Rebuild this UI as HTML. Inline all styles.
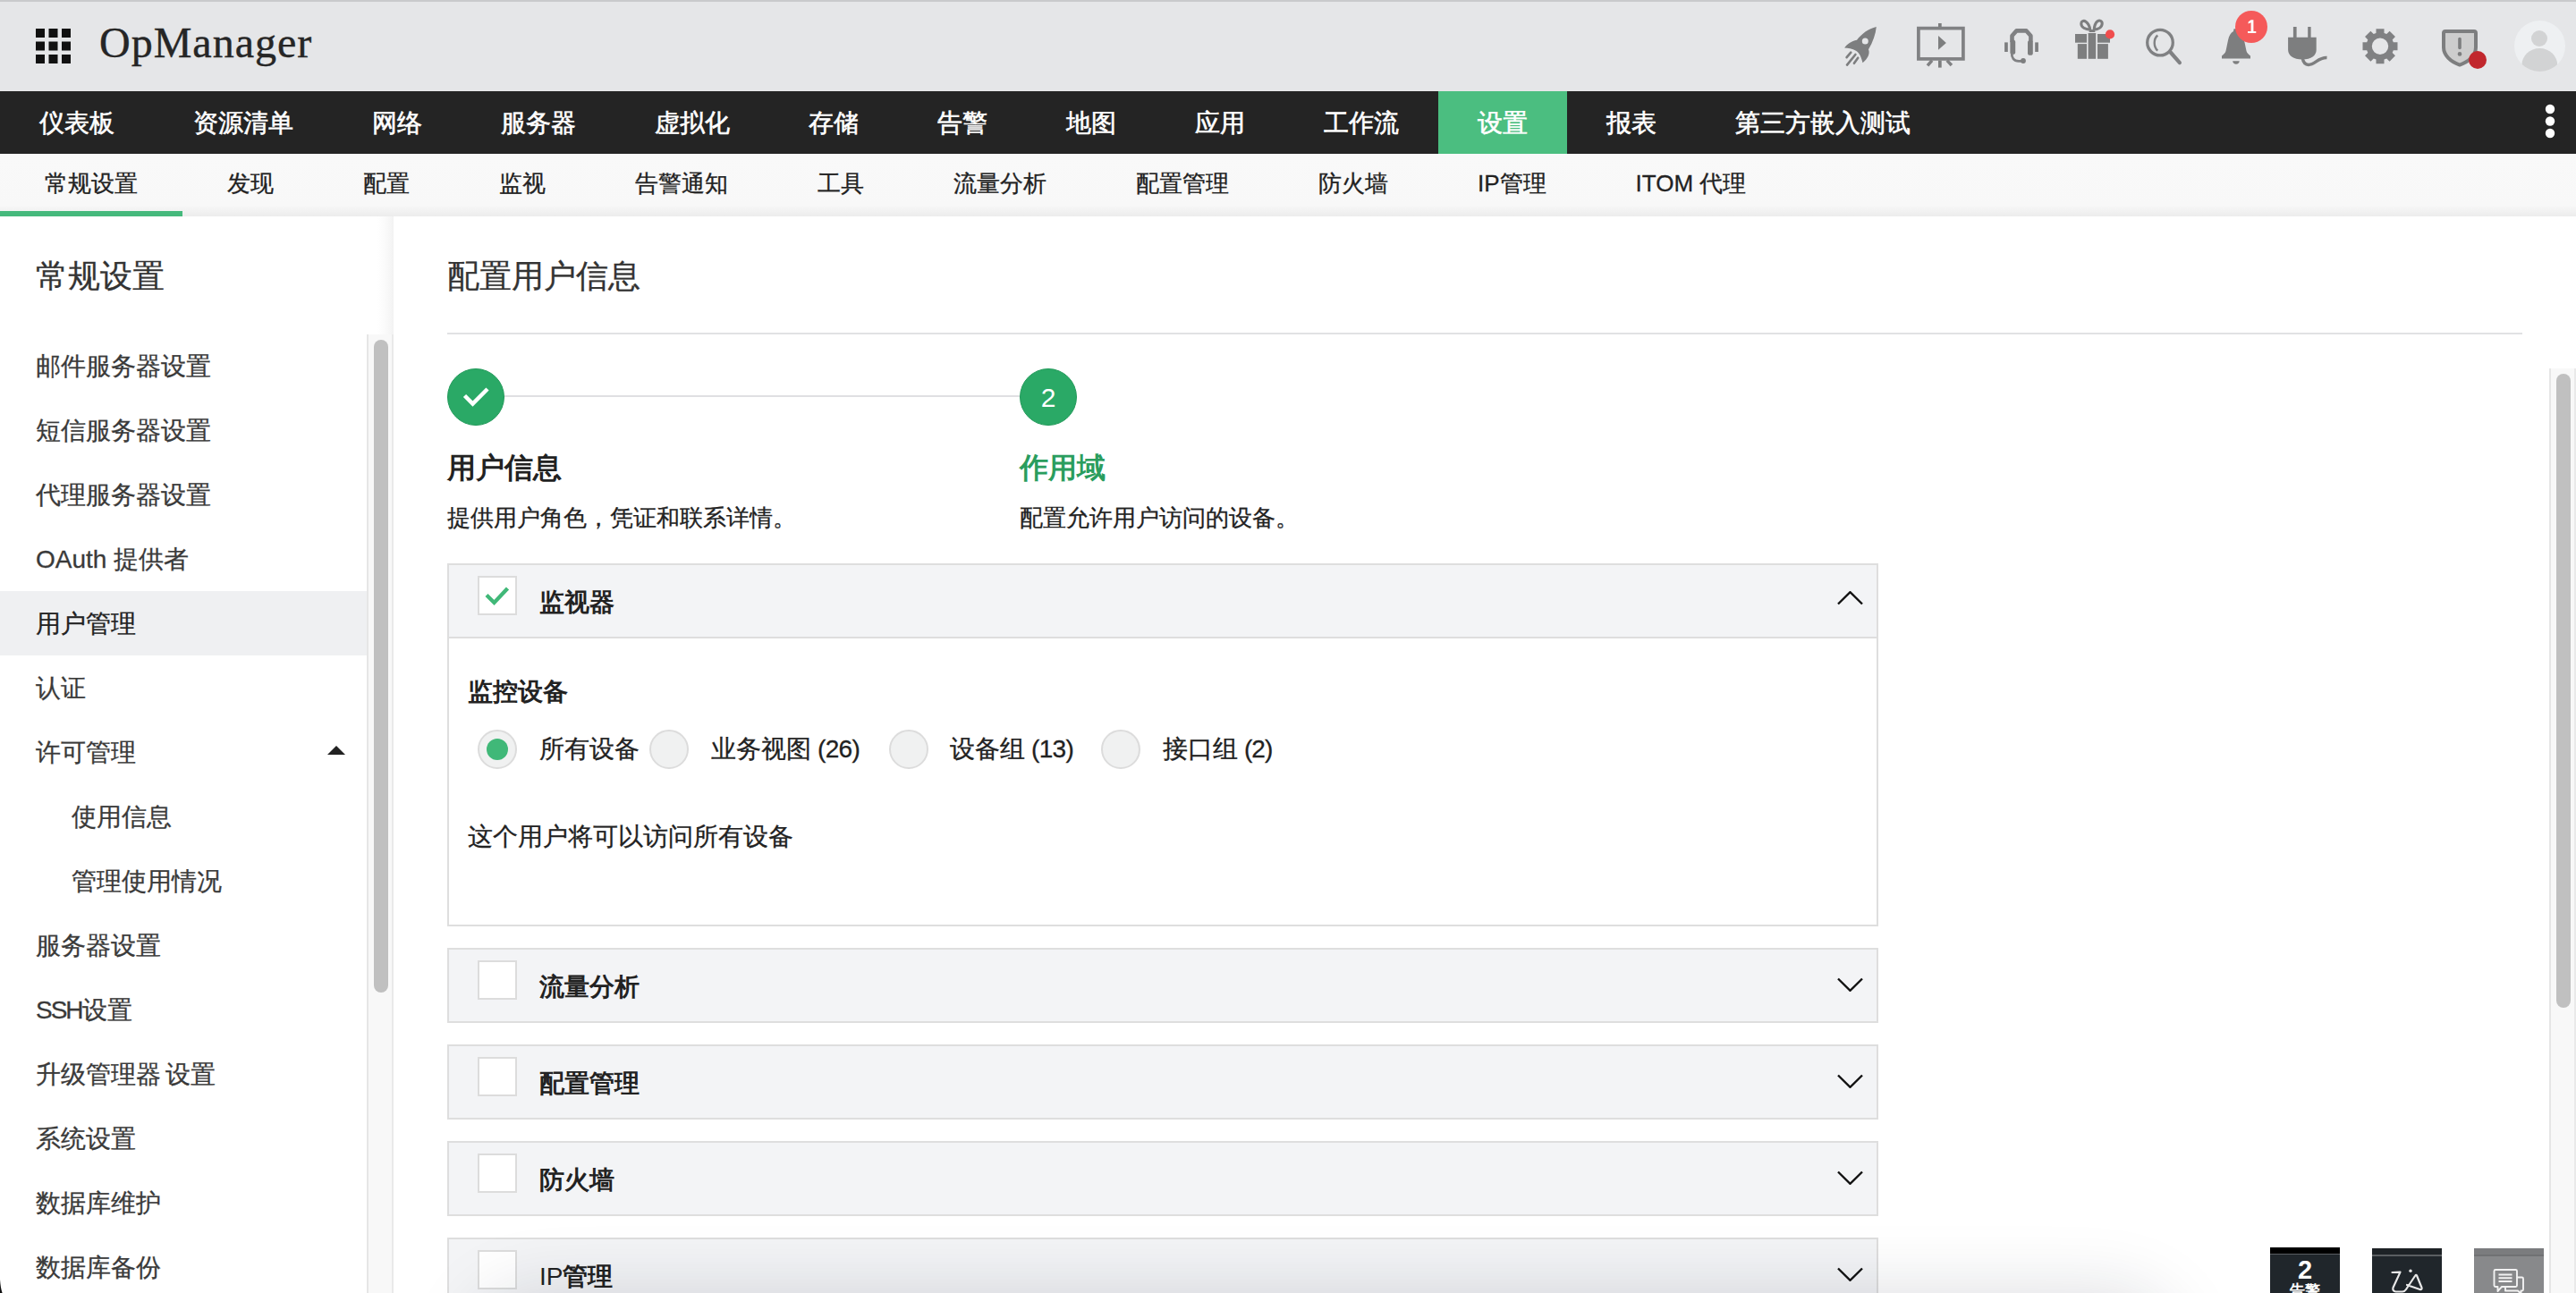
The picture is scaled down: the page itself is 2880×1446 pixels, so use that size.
<!DOCTYPE html>
<html><head><meta charset="utf-8">
<style>
*{margin:0;padding:0;box-sizing:border-box}
html,body{width:2880px;height:1446px;overflow:hidden;background:#fff;font-family:"Liberation Sans",sans-serif;color:#222}
.tk{-webkit-text-stroke:0.3px currentColor}
.abs{position:absolute}
#hdr{position:absolute;left:0;top:0;width:2880px;height:102px;background:#e5e6e8;border-top:2px solid #c9cacc}
#logo{position:absolute;left:111px;top:16px;font-family:"Liberation Serif",serif;font-size:48px;color:#262626;line-height:60px;letter-spacing:1px;-webkit-text-stroke:0.4px #262626}
#nav{position:absolute;left:0;top:102px;width:2880px;height:70px;background:#242424;display:flex;white-space:nowrap}
#nav div{padding:0 44px;font-size:28px;line-height:72px;color:#fff;height:70px;overflow:hidden;-webkit-text-stroke:0.6px #fff}
#nav div.on{background:#4bbe80}
#sub{position:absolute;left:0;top:172px;width:2880px;height:70px;background:linear-gradient(#f9f9f9 0,#f8f8f8 82%,#ececec 100%);display:flex;white-space:nowrap}
#sub div{padding:0 50px;font-size:26px;line-height:66px;color:#222;height:70px;position:relative}
#sub div.on:after{content:"";position:absolute;left:0;right:0;bottom:0;height:6px;background:#45b97c}
#side{position:absolute;left:0;top:242px;width:440px;height:1204px;background:#fff}
#side .strip{position:absolute;left:422px;top:0;width:18px;height:1204px;background:linear-gradient(90deg,#fff,#f9f9f9 60%,#f2f2f2)}
#side h2{position:absolute;left:40px;top:45px;font-size:36px;font-weight:normal;color:#333;line-height:44px}
.si{position:absolute;left:0;width:410px;height:72px;line-height:74px;font-size:28px;color:#3a3a3a;padding-left:40px;white-space:nowrap}
.si.sub{padding-left:80px}
.si.on{background:#eff0f2;color:#222}
.track{position:absolute;width:30px;background:#f8f8f8;border-left:2px solid #e6e6e6;border-right:2px solid #e9e9e9}
.thumb{position:absolute;width:16px;background:#c0c0c0;border-radius:8px}
#main h1{position:absolute;left:500px;top:287px;font-size:36px;font-weight:normal;color:#333;line-height:44px;white-space:nowrap}
.hr{position:absolute;left:500px;top:372px;width:2320px;height:2px;background:#e1e2e4}
.step{position:absolute;width:64px;height:64px;border-radius:50%;background:#2aa966;border:1px solid #229a5a;color:#fff;text-align:center;line-height:62px;font-size:28px}
.st{position:absolute;font-size:32px;font-weight:bold;line-height:42px;white-space:nowrap}
.sd{position:absolute;font-size:26px;line-height:34px;color:#222;white-space:nowrap}
.panel{position:absolute;left:500px;width:1600px;border:2px solid #dedede;background:#fff}
.ph{position:relative;height:80px;background:#f3f4f6}
.panel.open .ph{border-bottom:2px solid #dedede;height:82px}
.cb{position:absolute;left:32px;top:12px;width:44px;height:44px;background:#fff;border:2px solid #dcdcdc}
.pt{position:absolute;left:101px;top:24px;font-size:28px;font-weight:bold;line-height:36px;color:#222;white-space:nowrap}
.chev{position:absolute;left:1552px;top:29px}
.chev.dn{top:31px}
.radio{position:absolute;width:44px;height:44px;border-radius:50%;background:#f0f1f1;border:2px solid #dcdcdc}
.rl{position:absolute;font-size:28px;line-height:36px;color:#222;white-space:nowrap}
.dock{position:absolute;top:1395px;width:78px;height:60px}
</style></head><body>

<div id="hdr">
  <svg class="abs" style="left:40px;top:30px" width="40" height="40" viewBox="0 0 40 40">
    <g fill="#111">
      <rect x="0" y="0" width="10" height="10"/><rect x="14.5" y="0" width="10" height="10"/><rect x="29" y="0" width="10" height="10"/>
      <rect x="0" y="14.5" width="10" height="10"/><rect x="14.5" y="14.5" width="10" height="10"/><rect x="29" y="14.5" width="10" height="10"/>
      <rect x="0" y="29" width="10" height="10"/><rect x="14.5" y="29" width="10" height="10"/><rect x="29" y="29" width="10" height="10"/>
    </g>
  </svg>
  <div id="logo">OpManager</div>
</div>
<svg class="abs" style="left:2040px;top:0" width="840" height="102" viewBox="2040 0 840 102">
 <g fill="#7d7e7f" stroke="none">
  <!-- rocket -->
  <path d="M2062.1 53.4 C2065 49.5 2070 46 2076 44.8 C2081 38 2089 32 2097.8 30 C2097 38 2094 47 2089 55.3 C2091 60 2088 66 2082.5 70.3 C2081 64 2079 59 2075 56.7 C2071 54.5 2066 53.5 2062.1 53.4Z"/>
  <circle cx="2085.3" cy="46" r="3.5" fill="#e5e6e8"/>
  <g stroke="#7d7e7f" stroke-width="2.6" stroke-linecap="round" fill="none">
   <path d="M2064.6 64.2 L2069.3 58.7"/><path d="M2065 72.6 L2074.4 61"/><path d="M2072.9 70.8 L2077.2 64.7"/>
  </g>
  <!-- presentation -->
  <rect x="2144.9" y="31.6" width="50" height="34.3" fill="none" stroke="#808183" stroke-width="3.7"/>
  <rect x="2167" y="26" width="3.7" height="4"/>
  <rect x="2167" y="67.6" width="3.7" height="8"/>
  <path d="M2160 67.6 L2155 73.4" stroke="#808183" stroke-width="3.5" fill="none"/>
  <path d="M2176.8 67.6 L2181.9 73" stroke="#808183" stroke-width="3.5" fill="none"/>
  <path d="M2167 40 L2167 55.7 L2175.9 47.9Z"/>
  <!-- headset -->
  <path d="M2249.5 47 L2249.5 40 L2254.5 34.4 L2265.5 34.4 L2270.4 40 L2270.4 47" fill="none" stroke="#808183" stroke-width="4.6" stroke-linejoin="round"/>
  <rect x="2247.4" y="44.6" width="5.8" height="16.2" rx="2.6"/>
  <rect x="2267" y="45" width="5.8" height="16.8" rx="2.6"/>
  <rect x="2241.1" y="47.4" width="3.7" height="10.6"/>
  <rect x="2275.2" y="47.4" width="3.7" height="10.6"/>
  <path d="M2249.2 59 C2249 65 2251.5 68.3 2257 68.3 L2262 68.3" fill="none" stroke="#808183" stroke-width="2.8"/>
  <circle cx="2262" cy="68" r="2.9"/>
  <!-- gift -->
  <rect x="2320" y="38" width="13" height="9.7"/><rect x="2345" y="38" width="14" height="9.7"/>
  <rect x="2334.6" y="37" width="8.6" height="28.8"/>
  <rect x="2322.8" y="49.1" width="10.2" height="16.7"/><rect x="2345" y="49.1" width="11.9" height="16.7"/>
  <path d="M2336.8 33.2 C2332.5 32.8 2326.8 30.8 2326.8 26.5 C2326.8 23.6 2329.6 22.6 2332 24.2 C2334.8 26.2 2336.3 29.8 2336.8 33.2Z" fill="none" stroke="#7d7e7f" stroke-width="3.1"/>
  <path d="M2341.2 33.2 C2345.5 32.8 2350.2 30.5 2350.2 26.2 C2350.2 23.2 2347.3 22.3 2345 23.8 C2342.5 25.8 2341.5 29.5 2341.2 33.2Z" fill="none" stroke="#7d7e7f" stroke-width="3.1"/>
  <path d="M2335.5 36 C2335.8 33.8 2337.3 33 2339 33 C2340.7 33 2342.2 33.8 2342.5 36Z"/>
  <circle cx="2359" cy="38.4" r="5.1" fill="#f04d4d"/>
  <!-- search -->
  <circle cx="2415" cy="47.6" r="14.3" fill="none" stroke="#808183" stroke-width="3.3"/>
  <path d="M2426.7 58.5 L2436.9 70.1" stroke="#808183" stroke-width="4.2" stroke-linecap="round"/>
  <path d="M2412.3 39.5 C2407.5 43.5 2407.5 52.5 2412.3 56.7" fill="none" stroke="#808183" stroke-width="2.4"/>
  <!-- bell -->
  <path d="M2497.5 32.3 L2502.5 32.3 L2503 35 C2506 36.5 2508 40 2509 45 L2511.5 57 C2512.2 59.5 2514 61 2516 62.4 L2516 65.6 L2484 65.6 L2484 62.4 C2486 61 2487.8 59.5 2488.5 57 L2491 45 C2492 40 2494 36.5 2497 35Z"/>
  <path d="M2496.2 68.2 L2503.7 68.2 C2503.7 70.5 2502 71.7 2500 71.7 C2498 71.7 2496.2 70.5 2496.2 68.2Z"/>
  <!-- plug -->
  <rect x="2563.9" y="30" width="3.7" height="13"/><rect x="2580.2" y="30" width="3.4" height="13"/>
  <path d="M2558.1 41.8 L2589.7 41.8 L2589.7 55.7 C2589.7 62 2584 66.4 2574 66.4 C2564 66.4 2558.1 62 2558.1 55.7Z"/>
  <path d="M2574 64 C2575 70 2578 72.4 2581 72.4 C2588 72.4 2592 64 2601.5 64.5" fill="none" stroke="#7d7e7f" stroke-width="3.5"/>
  <!-- gear -->
  <path transform="translate(2661 51.7)" fill-rule="evenodd" fill="#808183" d="M-4.53 -14.82 L-4.50 -19.49 L4.50 -19.49 L4.53 -14.82 L7.28 -13.69 L10.60 -16.96 L16.96 -10.60 L13.69 -7.28 L14.82 -4.53 L19.49 -4.50 L19.49 4.50 L14.82 4.53 L13.69 7.28 L16.96 10.60 L10.60 16.96 L7.28 13.69 L4.53 14.82 L4.50 19.49 L-4.50 19.49 L-4.53 14.82 L-7.28 13.69 L-10.60 16.96 L-16.96 10.60 L-13.69 7.28 L-14.82 4.53 L-19.49 4.50 L-19.49 -4.50 L-14.82 -4.53 L-13.69 -7.28 L-16.96 -10.60 L-10.60 -16.96 L-7.28 -13.69Z M9.2 0 A9.2 9.2 0 1 0 -9.2 0 A9.2 9.2 0 1 0 9.2 0Z"/>
  <!-- shield -->
  <path d="M2734 35 L2766 35 Q2768 35 2768 37 L2768 53 C2768 62 2760 69 2750 72.6 C2740 69 2732 62 2732 53 L2732 37 Q2732 35 2734 35Z" fill="#cdcdcd" stroke="#7d7e7f" stroke-width="4" stroke-linejoin="round"/>
  <path d="M2750 43.5 L2750 53.5" stroke="#7d7e7f" stroke-width="3.6" stroke-linecap="round"/>
  <circle cx="2750" cy="60.4" r="2.3"/>
  <circle cx="2770" cy="67" r="10" fill="#c1272d"/>
  <!-- avatar -->
  <circle cx="2839.5" cy="51.5" r="28.5" fill="#eef0f2"/>
  <clipPath id="avc"><circle cx="2839.5" cy="51.5" r="28.5"/></clipPath>
  <circle cx="2839" cy="43" r="9" fill="#d2d3d4"/>
  <ellipse cx="2839.3" cy="73" rx="20" ry="19" fill="#d2d3d4" clip-path="url(#avc)"/>
 </g>
 <circle cx="2517" cy="30" r="18" fill="#f55a5a"/>
 <path d="M2516.6 22.2 L2519.4 22.2 L2519.4 35 L2522.3 35 L2522.3 37 L2513 37 L2513 35 L2516.6 35 L2516.6 25.3 L2513.6 26.6 L2513.6 24.5Z" fill="#fff"/>
</svg>


<div id="nav" class="tk">
  <div>仪表板</div><div>资源清单</div><div>网络</div><div>服务器</div><div>虚拟化</div><div>存储</div><div>告警</div><div>地图</div><div>应用</div><div>工作流</div><div class="on">设置</div><div>报表</div><div>第三方嵌入测试</div>
</div>
<svg class="abs" style="left:2840px;top:115px" width="24" height="44" viewBox="0 0 24 44"><g fill="#fff"><circle cx="11" cy="7" r="5.2"/><circle cx="11" cy="20.5" r="5.2"/><circle cx="11" cy="34" r="5.2"/></g></svg>

<div id="sub" class="tk">
  <div class="on">常规设置</div><div>发现</div><div>配置</div><div>监视</div><div>告警通知</div><div>工具</div><div>流量分析</div><div>配置管理</div><div>防火墙</div><div>IP管理</div><div>ITOM 代理</div>
</div>

<div id="side" class="tk">
  <div class="strip"></div>
  <h2>常规设置</h2>
  <div class="si" style="top:131px">邮件服务器设置</div>
  <div class="si" style="top:203px">短信服务器设置</div>
  <div class="si" style="top:275px">代理服务器设置</div>
  <div class="si" style="top:347px">OAuth 提供者</div>
  <div class="si on" style="top:419px">用户管理</div>
  <div class="si" style="top:491px">认证</div>
  <div class="si" style="top:563px">许可管理</div>
  <div class="si sub" style="top:635px">使用信息</div>
  <div class="si sub" style="top:707px">管理使用情况</div>
  <div class="si" style="top:779px">服务器设置</div>
  <div class="si" style="top:851px"><span style="letter-spacing:-2px">SSH</span>设置</div>
  <div class="si" style="top:923px">升级管理器<span style="letter-spacing:-2.4px"> </span>设置</div>
  <div class="si" style="top:995px">系统设置</div>
  <div class="si" style="top:1067px">数据库维护</div>
  <div class="si" style="top:1139px">数据库备份</div>
  <svg class="abs" style="left:366px;top:592px" width="20" height="10" viewBox="0 0 20 10"><path d="M10 0 L20 10 L0 10Z" fill="#222"/></svg>
  <div class="track" style="left:410px;top:132px;height:1072px"></div>
  <div class="thumb" style="left:418px;top:138px;height:730px"></div>
</div>

<div id="main">
  <h1 class="tk">配置用户信息</h1>
  <div class="hr"></div>
  <div class="abs" style="left:564px;top:442px;width:576px;height:2px;background:#e0e0e2"></div>
  <div class="step" style="left:500px;top:412px">
    <svg class="abs" style="left:0;top:0" width="62" height="62" viewBox="0 0 62 62"><path d="M18.5 29.5 L27.5 38.5 L44 22" fill="none" stroke="#fff" stroke-width="4.5"/></svg>
  </div>
  <div class="step" style="left:1140px;top:412px;font-size:30px;line-height:64px">2</div>
  <div class="st" style="left:500px;top:502px;color:#222">用户信息</div>
  <div class="st" style="left:1140px;top:502px;color:#2a9d5e">作用域</div>
  <div class="sd tk" style="left:500px;top:562px">提供用户角色，凭证和联系详情。</div>
  <div class="sd tk" style="left:1140px;top:562px">配置允许用户访问的设备。</div>

  <div class="panel open" style="top:630px;height:406px">
    <div class="ph">
      <div class="cb"><svg class="abs" style="left:0;top:0" width="40" height="40" viewBox="0 0 40 40"><path d="M8 19.5 L16.5 28 L31.5 12" fill="none" stroke="#40b878" stroke-width="4.3"/></svg></div>
      <div class="pt">监视器</div>
      <svg class="chev" width="30" height="16" viewBox="0 0 30 16"><path d="M1 14.5 L14.5 1.2 L28 14.5" fill="none" stroke="#111" stroke-width="2.4"/></svg>
    </div>
    <div class="rl" style="left:21px;top:124px;font-weight:bold">监控设备</div>
    <div class="radio" style="left:32px;top:184px"><div class="abs" style="left:8px;top:8px;width:24px;height:24px;border-radius:50%;background:#40b878"></div></div>
    <div class="rl tk" style="left:101px;top:188px">所有设备</div>
    <div class="radio" style="left:224px;top:184px"></div>
    <div class="rl tk" style="left:293px;top:188px">业务视图<span style="letter-spacing:-0.7px"> (26)</span></div>
    <div class="radio" style="left:492px;top:184px"></div>
    <div class="rl tk" style="left:560px;top:188px">设备组<span style="letter-spacing:-0.7px"> (13)</span></div>
    <div class="radio" style="left:729px;top:184px"></div>
    <div class="rl tk" style="left:798px;top:188px">接口组<span style="letter-spacing:-0.9px"> (2)</span></div>
    <div class="rl tk" style="left:21px;top:286px">这个用户将可以访问所有设备</div>
  </div>

  <div class="panel" style="top:1060px;height:84px"><div class="ph"><div class="cb"></div><div class="pt" style="top:24px">流量分析</div>
    <svg class="chev dn" width="30" height="16" viewBox="0 0 30 16"><path d="M1 1.5 L14.5 14.8 L28 1.5" fill="none" stroke="#111" stroke-width="2.4"/></svg></div></div>
  <div class="panel" style="top:1168px;height:84px"><div class="ph"><div class="cb"></div><div class="pt" style="top:24px">配置管理</div>
    <svg class="chev dn" width="30" height="16" viewBox="0 0 30 16"><path d="M1 1.5 L14.5 14.8 L28 1.5" fill="none" stroke="#111" stroke-width="2.4"/></svg></div></div>
  <div class="panel" style="top:1276px;height:84px"><div class="ph"><div class="cb"></div><div class="pt" style="top:24px">防火墙</div>
    <svg class="chev dn" width="30" height="16" viewBox="0 0 30 16"><path d="M1 1.5 L14.5 14.8 L28 1.5" fill="none" stroke="#111" stroke-width="2.4"/></svg></div></div>
  <div class="panel" style="top:1384px;height:84px"><div class="ph"><div class="cb"></div><div class="pt" style="top:24px"><span style="font-weight:normal">IP</span>管理</div>
    <svg class="chev dn" width="30" height="16" viewBox="0 0 30 16"><path d="M1 1.5 L14.5 14.8 L28 1.5" fill="none" stroke="#111" stroke-width="2.4"/></svg></div></div>

  <div class="track" style="left:2850px;top:412px;height:1034px"></div>
  <div class="thumb" style="left:2858px;top:418px;height:709px"></div>
</div>


<div class="abs" style="left:0;top:1200px;width:2850px;height:246px;overflow:hidden"><div class="abs" style="left:560px;top:276px;width:1840px;height:100px;border-radius:40px;box-shadow:0 0 80px 30px rgba(20,28,45,0.15)"></div></div>
<div class="abs" style="left:2538px;top:1395px;width:78px;height:51px;background:#20262b;border-top:7px solid #000;overflow:hidden">
  <div class="abs" style="left:0;top:0;width:78px;height:1px;background:#5a5e62"></div>
  <div class="abs" style="left:0;top:1px;width:78px;text-align:center;color:#fff;font-weight:bold;font-size:29px;line-height:34px">2</div>
  <div class="abs" style="left:0;top:32px;width:78px;text-align:center;color:#fff;font-weight:bold;font-size:17px;line-height:20px">告警</div>
</div>
<div class="abs" style="left:2652px;top:1396px;width:78px;height:50px;background:#20262b;border-top:7px solid #1d2226">
  <div class="abs" style="left:0;top:0;width:78px;height:1.5px;background:#5a5e62"></div>
  <svg class="abs" style="left:0;top:-7px" width="78" height="60" viewBox="2652 1396 78 60"><g fill="none" stroke="#e8e8e8" stroke-width="2.2" stroke-linejoin="round" stroke-linecap="round">
   <path d="M2674.5 1423 L2683.5 1422.6 L2675.5 1440 C2674.8 1442.5 2676 1444.5 2678.5 1444.5 L2686 1444.5 C2688 1444.5 2689 1443.5 2690 1442 L2700.3 1426.5 C2700.8 1425.7 2701.6 1425.7 2702 1426.5 L2707.5 1440 C2708 1441.5 2707 1442.5 2705.5 1442 L2691 1437"/>
  </g><circle cx="2695" cy="1421.3" r="1.7" fill="#e8e8e8"/></svg>
</div>
<div class="abs" style="left:2766px;top:1396px;width:78px;height:50px;background:#88898b;border-top:7px solid #7b7c7e">
  <div class="abs" style="left:0;top:0;width:78px;height:1.5px;background:#707173"></div>
  <svg class="abs" style="left:0;top:-7px" width="78" height="60" viewBox="2766 1396 78 60"><g fill="none" stroke="#f2f2f2" stroke-width="1.9" stroke-linejoin="round">
   <path d="M2790 1420 L2812.5 1420 Q2814 1420 2814 1421.5 L2814 1437.5 Q2814 1439 2812.5 1439 L2797 1439 L2792.5 1444 L2792.5 1439 L2790 1439 Q2788.5 1439 2788.5 1437.5 L2788.5 1421.5 Q2788.5 1420 2790 1420Z"/>
   <path d="M2814 1428.5 L2819.5 1428.5 Q2821 1428.5 2821 1430 L2821 1442 Q2821 1443.5 2819.5 1443.5 L2818.5 1443.5 L2818.5 1447 L2815 1443.5 L2801 1443.5 L2801 1439"/>
   <path d="M2793.5 1425.5 L2808.5 1425.5 M2793.5 1429.3 L2808.5 1429.3 M2793.5 1433 L2808.5 1433"/>
  </g></svg>
</div>
<svg class="abs" style="left:0;top:1426px" width="6" height="20" viewBox="0 0 6 20"><path d="M0 5 C0.4 11 1.2 16 2.6 20 L0 20Z" fill="#111"/></svg>
</body></html>
